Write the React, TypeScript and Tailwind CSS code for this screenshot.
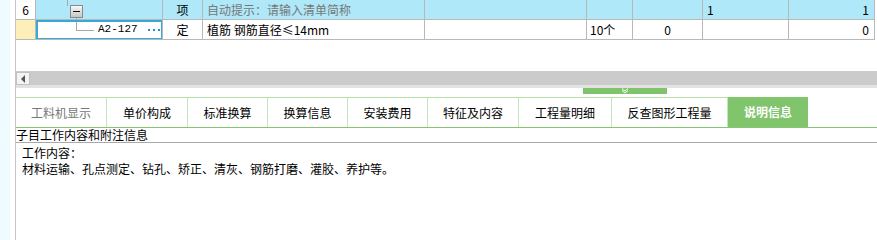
const cjk = "font-['Noto_Sans_CJK_SC','Noto_Sans',sans-serif]";
const grid = "grid grid-cols-[20px_127px_40px_222px_162px_46px_70px_86px_86px]";
const cell = "h-[20px] border-r border-b border-[#b8b8b8] flex items-center text-[12px] leading-none overflow-hidden whitespace-nowrap";

const tabs = [
  { label: "工料机显示", w: "w-[91px]", muted: true },
  { label: "单价构成", w: "w-[81px]" },
  { label: "标准换算", w: "w-[80px]" },
  { label: "换算信息", w: "w-[80px]" },
  { label: "安装费用", w: "w-[80px]" },
  { label: "特征及内容", w: "w-[91px]" },
  { label: "工程量明细", w: "w-[93px]" },
  { label: "反查图形工程量", w: "w-[116px]" },
];

function TreeTop() {
  return (
    <svg width="126" height="19" className="shrink-0">
      <defs>
        <linearGradient id="bx" x1="0" y1="0" x2="0" y2="1">
          <stop offset="0" stopColor="#fafafa" />
          <stop offset="1" stopColor="#c4c4c4" />
        </linearGradient>
      </defs>
      <line x1="31.5" y1="0" x2="31.5" y2="6" stroke="#a8a8a8" />
      <line x1="40.5" y1="17" x2="40.5" y2="19" stroke="#a8a8a8" />
      <rect x="34.5" y="5.5" width="12" height="12" fill="url(#bx)" stroke="#8a8a8a" />
      <line x1="37" y1="11.5" x2="44" y2="11.5" stroke="#111" />
    </svg>
  );
}

export default function App() {
  return (
    <div className={`w-[877px] h-[240px] flex bg-white text-black overflow-hidden ${cjk}`}>
      <div className="w-[10px] bg-[#effbfe]" />
      <div className="w-[6px] border-r border-[#c6c6c6]" />

      <div className="flex-1 flex flex-col min-w-0">
        {/* grid rows */}
        <div className={grid}>
          <div className={`${cell} justify-center bg-white`}>6</div>
          <div className={`${cell} bg-[#afe8f9]`}>
            <TreeTop />
          </div>
          <div className={`${cell} justify-center bg-[#afe8f9]`}>项</div>
          <div className={`${cell} bg-[#afe8f9] pl-[4px] text-[#777777]`}>自动提示：请输入清单简称</div>
          <div className={`${cell} bg-[#afe8f9]`} />
          <div className={`${cell} bg-[#afe8f9]`} />
          <div className={`${cell} bg-[#afe8f9]`} />
          <div className={`${cell} bg-[#afe8f9] pl-[4px]`}>1</div>
          <div className={`${cell} bg-[#afe8f9] justify-end pr-[5px]`}>1</div>

          <div className={`${cell} bg-[#fdefb9]`} />
          <div className={`${cell} relative`}>
            <svg width="60" height="19" className="shrink-0">
              <line x1="40.5" y1="0" x2="40.5" y2="10" stroke="#a8a8a8" />
              <line x1="40" y1="10.5" x2="58" y2="10.5" stroke="#a8a8a8" />
            </svg>
            <span className="ml-[2px] font-['Liberation_Mono',monospace] text-[11px]">A2-127</span>
            <svg width="12" height="4" className="ml-[10px] shrink-0">
              <rect x="0" y="1" width="2" height="2" fill="#2f86d6" />
              <rect x="5" y="1" width="2" height="2" fill="#2f86d6" />
              <rect x="10" y="1" width="2" height="2" fill="#2f86d6" />
            </svg>
            <div className="absolute left-0 top-0 -right-px -bottom-px border-2 border-[#3aa7d9]" />
          </div>
          <div className={`${cell} justify-center`}>定</div>
          <div className={`${cell} pl-[4px]`}>植筋 钢筋直径≤14mm</div>
          <div className={cell} />
          <div className={`${cell} pl-[3px]`}>10个</div>
          <div className={`${cell} justify-center`}>0</div>
          <div className={cell} />
          <div className={`${cell} justify-end pr-[5px]`}>0</div>
        </div>

        <div className="h-[31px]" />

        {/* horizontal scrollbar */}
        <div className="h-[14px] flex bg-[#cbcbcb]">
          <div className="w-[14px] h-[13px] mt-[1px] bg-[#f4f4f4] border border-[#c2c2c2] flex items-center justify-center">
            <svg width="5" height="8"><polygon points="4,0 4,8 0,4" fill="#555" /></svg>
          </div>
        </div>
        <div className="h-[3px] bg-[#e2e2e2]" />
        <div className="h-[9px] flex">
          <div className="ml-[567px] w-[84px] h-[6px] bg-[#7fc46b] flex justify-center">
            <svg width="10" height="6">
              <polyline points="2,0.5 5,3 8,0.5" fill="none" stroke="#fff" strokeWidth="1" />
              <polyline points="2,2.5 5,5 8,2.5" fill="none" stroke="#fff" strokeWidth="1" />
            </svg>
          </div>
        </div>

        {/* tabs */}
        <div className="h-[31px] flex border-b border-[#86c572]">
          {tabs.map((t) => (
            <div
              key={t.label}
              className={`${t.w} h-full border-t border-r border-t-[#b7dfa8] border-r-[#c6e6ba] flex items-center justify-center text-[12px] ${t.muted ? "text-[#777]" : "text-black"}`}
            >
              {t.label}
            </div>
          ))}
          <div className="w-[80px] h-full bg-[#80c46c] flex items-center justify-center text-[12px] font-bold text-white">说明信息</div>
        </div>

        <div className="h-[15px] border-b border-[#a9a9a9] text-[12px] leading-[14px]">子目工作内容和附注信息</div>
        <div className="pl-[6px] pt-[2px] text-[12px] leading-[16px]">
          <div>工作内容：</div>
          <div>材料运输、孔点测定、钻孔、矫正、清灰、钢筋打磨、灌胶、养护等。</div>
        </div>
      </div>
    </div>
  );
}
